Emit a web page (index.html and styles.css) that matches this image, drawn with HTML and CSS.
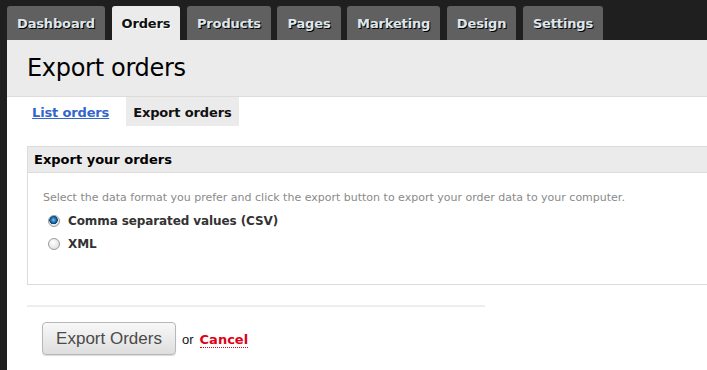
FILE: index.html
```html
<!DOCTYPE html>
<html>
<head>
<meta charset="utf-8">
<link rel="stylesheet" href="styles.css">
</head>
<body>
<nav class="tabs">
  <a class="tab">Dashboard</a>
  <a class="tab active">Orders</a>
  <a class="tab">Products</a>
  <a class="tab">Pages</a>
  <a class="tab">Marketing</a>
  <a class="tab">Design</a>
  <a class="tab">Settings</a>
</nav>
<main class="main">
  <header class="page-head">
    <h1 class="title">Export orders</h1>
  </header>
  <div class="subnav">
    <a class="sub-link" href="#">List orders</a>
    <span class="sub-active">Export orders</span>
  </div>
  <section class="box">
    <h2 class="box-head">Export your orders</h2>
    <div class="box-body">
      <p class="hint">Select the data format you prefer and click the export button to export your order data to your computer.</p>
      <label class="opt"><input type="radio" name="fmt" class="radio" checked> Comma separated values (CSV)</label>
      <label class="opt"><input type="radio" name="fmt" class="radio"> XML</label>
    </div>
  </section>
  <hr class="sep">
  <div class="actions">
    <button class="btn">Export Orders</button>
    <span class="or">or</span>
    <a class="cancel" href="#">Cancel</a>
  </div>
</main>
</body>
</html>
```
FILE: styles.css
```css
html, body {
  margin: 0;
  padding: 0;
}
body {
  background: #1f1f1f;
  font-family: "DejaVu Sans", Verdana, sans-serif;
  width: 707px;
  height: 370px;
  overflow: hidden;
}
.tabs {
  display: flex;
  gap: 6.6px;
  padding: 6px 0 0 7px;
  height: 34px;
}
.tab {
  display: flex;
  align-items: center;
  padding: 0 10px;
  background: #606060;
  color: #dfe6ea;
  font-weight: bold;
  font-size: 13px;
  letter-spacing: -0.15px;
  text-shadow: 1px 1px 0 #000;
  border-radius: 3px 3px 0 0;
}
.tab.active {
  background: #ebebeb;
  color: #111;
  text-shadow: 1px 1px 0 #fff;
}
.main {
  margin-left: 7px;
  background: #fff;
  height: 330px;
}
.page-head {
  background: #ebebeb;
  height: 56px;
  border-bottom: 1px solid #dcdcdc;
  padding-left: 20px;
  display: flex;
  align-items: center;
}
.title {
  margin: 0;
  font-weight: normal;
  font-size: 24px;
  color: #000;
  letter-spacing: -0.3px;
}
.subnav {
  display: flex;
  align-items: stretch;
  height: 29px;
  padding-left: 25px;
  gap: 17px;
}
.sub-link {
  display: flex;
  align-items: center;
  padding-top: 2px;
  color: #3366cc;
  font-weight: bold;
  font-size: 13px;
  letter-spacing: -0.15px;
  text-decoration: underline;
}
.sub-active {
  display: flex;
  align-items: center;
  padding: 2px 7px 0 7px;
  background: #ebebeb;
  color: #111;
  font-weight: bold;
  font-size: 13px;
  letter-spacing: -0.15px;
}
.box {
  margin: 20px -20px 0 20px;
  border: 1px solid #dcdcdc;
  height: 137px;
}
.box-head {
  margin: 0;
  height: 25px;
  background: #ebebeb;
  border-bottom: 1px solid #dcdcdc;
  font-size: 13px;
  font-weight: bold;
  color: #000;
  padding-left: 6px;
  display: flex;
  align-items: center;
}
.box-body {
  padding: 18px 0 0 15px;
}
.hint {
  margin: 0 0 5px 0;
  font-size: 11px;
  color: #8a8a8a;
}
.opt {
  display: flex;
  align-items: center;
  gap: 8px;
  font-size: 12px;
  font-weight: bold;
  color: #333;
  height: 23px;
  padding-left: 5px;
  letter-spacing: -0.1px;
}
.radio {
  appearance: none;
  -webkit-appearance: none;
  margin: 0;
  width: 12px;
  height: 12px;
  border-radius: 50%;
  border: 1px solid #9a9a9a;
  background: radial-gradient(circle at 40% 35%, #fff 0, #e4e4e4 70%, #c8c8c8 100%);
}
.radio:checked {
  background:
    radial-gradient(circle at 45% 40%, #7fc4f0 0, #1c6fb0 2.5px, #0b3f70 4px, transparent 4.5px),
    radial-gradient(circle at 40% 35%, #fff 0, #e4e4e4 70%, #c8c8c8 100%);
}
.sep {
  margin: 20px 0 0 20px;
  width: 458px;
  border: 0;
  height: 2px;
  background: #eeeeee;
}
.actions {
  display: flex;
  align-items: center;
  padding: 15px 0 0 35px;
}
.btn {
  width: 134px;
  height: 33px;
  font-family: "Liberation Sans", Arial, sans-serif;
  font-size: 17px;
  color: #4a4a4a;
  border: 1px solid #b8b8b8;
  border-radius: 4px;
  background: linear-gradient(#f8f8f8, #dedede);
  box-shadow: 0 1px 1px rgba(0,0,0,0.15);
  padding: 0;
}
.or {
  font-family: "Liberation Sans", Arial, sans-serif;
  font-size: 13px;
  color: #111;
  margin: 0 6px 0 6px;
  padding-top: 2px;
}
.cancel {
  color: #e00014;
  font-weight: bold;
  font-size: 13px;
  text-decoration: none;
  border-bottom: 1px dotted #e00014;
  margin-top: 3px;
}
```
